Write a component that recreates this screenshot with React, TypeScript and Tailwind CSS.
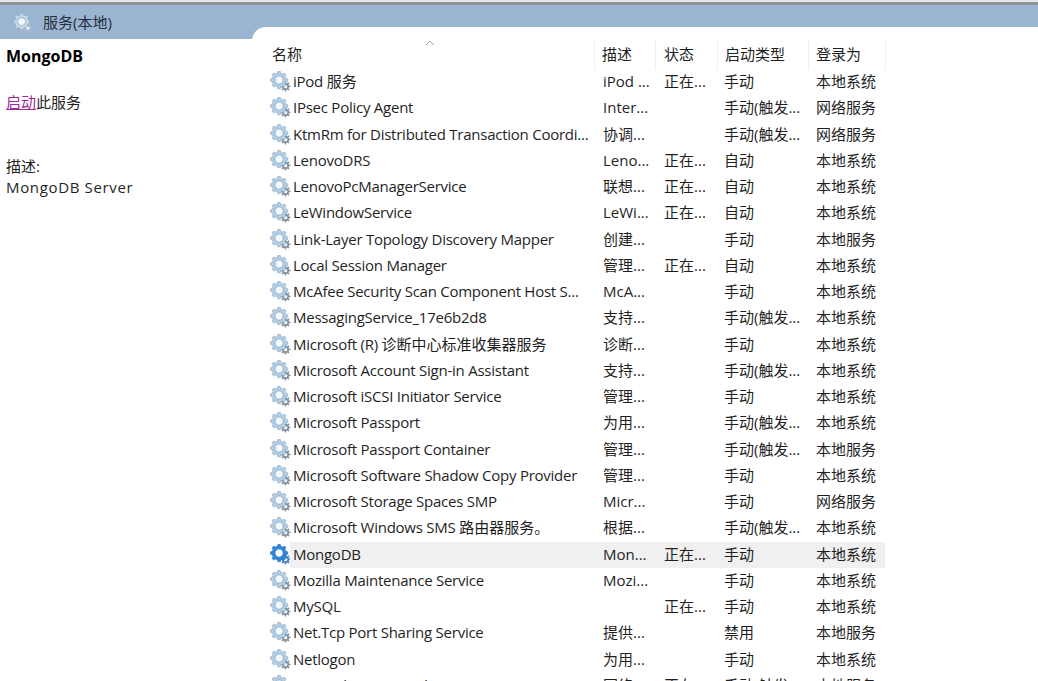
import React from "react";

function gearPath(cx: number, cy: number, ro: number, ri: number, teeth: number) {
  const pts: string[] = [];
  const step = (Math.PI * 2) / teeth;
  for (let i = 0; i < teeth; i++) {
    const a = i * step - Math.PI / 2;
    const list: [number, number][] = [
      [a - step * 0.3, ri],
      [a - step * 0.18, ro],
      [a + step * 0.18, ro],
      [a + step * 0.3, ri],
    ];
    for (const [t, r] of list) {
      pts.push(`${(cx + Math.cos(t) * r).toFixed(2)} ${(cy + Math.sin(t) * r).toFixed(2)}`);
    }
  }
  return "M" + pts.join("L") + "Z";
}

function Gear({ active = false, size = 21, faded = false }: { active?: boolean; size?: number; faded?: boolean }) {
  const main = active ? "#2f86d8" : faded ? "#c4d9e8" : "#b4cfe4";
  const edge = active ? "#2270bf" : faded ? "#8aa9c0" : "#86a6c2";
  const small = active ? "#4a86c2" : faded ? "#a9bccd" : "#8795a3";
  return (
    <svg width={size} height={size} viewBox="0 0 22 22" className="shrink-0">
      <path d={gearPath(16.2, 16.2, 5.4, 3.9, 8)} fill={small} />
      <circle cx="16.2" cy="16.2" r="1.9" fill="#ffffff" />
      <path d={gearPath(9.5, 9.5, 9.2, 7.4, 8)} fill={main} stroke={edge} strokeWidth="0.6" strokeLinejoin="round" />
      <circle cx="9.5" cy="9.5" r="4.4" fill={active ? "#f4f9fe" : "#f3f8fc"} stroke={edge} strokeWidth="0.9" />
    </svg>
  );
}

function Name({ text }: { text: string }) {
  const parts = text.split(/([\u4e00-\u9fff。]+)/);
  return (
    <>
      {parts.map((p, i) =>
        /[\u4e00-\u9fff]/.test(p) ? (
          <span key={i}>{p}</span>
        ) : (
          <span key={i} className="tracking-[-0.25px]">
            {p}
          </span>
        )
      )}
    </>
  );
}

type Row = [string, string, string, string, string];
const rows: Row[] = [
  ["iPod 服务", "iPod ...", "正在...", "手动", "本地系统"],
  ["IPsec Policy Agent", "Inter...", "", "手动(触发...", "网络服务"],
  ["KtmRm for Distributed Transaction Coordi...", "协调...", "", "手动(触发...", "网络服务"],
  ["LenovoDRS", "Leno...", "正在...", "自动", "本地系统"],
  ["LenovoPcManagerService", "联想...", "正在...", "自动", "本地系统"],
  ["LeWindowService", "LeWi...", "正在...", "自动", "本地系统"],
  ["Link-Layer Topology Discovery Mapper", "创建...", "", "手动", "本地服务"],
  ["Local Session Manager", "管理...", "正在...", "自动", "本地系统"],
  ["McAfee Security Scan Component Host S...", "McA...", "", "手动", "本地系统"],
  ["MessagingService_17e6b2d8", "支持...", "", "手动(触发...", "本地系统"],
  ["Microsoft (R) 诊断中心标准收集器服务", "诊断...", "", "手动", "本地系统"],
  ["Microsoft Account Sign-in Assistant", "支持...", "", "手动(触发...", "本地系统"],
  ["Microsoft iSCSI Initiator Service", "管理...", "", "手动", "本地系统"],
  ["Microsoft Passport", "为用...", "", "手动(触发...", "本地系统"],
  ["Microsoft Passport Container", "管理...", "", "手动(触发...", "本地服务"],
  ["Microsoft Software Shadow Copy Provider", "管理...", "", "手动", "本地系统"],
  ["Microsoft Storage Spaces SMP", "Micr...", "", "手动", "网络服务"],
  ["Microsoft Windows SMS 路由器服务。", "根据...", "", "手动(触发...", "本地系统"],
  ["MongoDB", "Mon...", "正在...", "手动", "本地系统"],
  ["Mozilla Maintenance Service", "Mozi...", "", "手动", "本地系统"],
  ["MySQL", "", "正在...", "手动", "本地系统"],
  ["Net.Tcp Port Sharing Service", "提供...", "", "禁用", "本地服务"],
  ["Netlogon", "为用...", "", "手动", "本地系统"],
  ["Network Connected Devices Auto-Setup", "网络...", "正在...", "手动(触发...", "本地服务"],
];

const font = { fontFamily: '"Open Sans", "Noto Sans CJK SC", sans-serif' };

export default function App() {
  return (
    <div className="h-[681px] w-[1038px] overflow-hidden bg-white text-[15px] text-[#1f1f1f] flex flex-col" style={font}>
      <div className="h-[2px] bg-[#e4e6ea]" />
      <div className="h-[3px] bg-[#8f949b]" />
      <div className="h-[34px] shrink-0 bg-[#9bb4d1] flex items-start pl-[13px] pt-[8px] gap-[10px]">
        <Gear size={20} faded />
        <span className="text-[15px] leading-[26px] text-[#26303c] -mt-[4px]">服务(本地)</span>
      </div>
      <div className="flex flex-1 min-h-0">
        <div className="w-[252px] shrink-0 bg-white pl-[6px] pt-[7px]">
          <div className="font-bold text-[16px] leading-[20px] text-black">MongoDB</div>
          <div className="mt-[26px] leading-[20px]">
            <span className="text-[#a0269a] underline">启动</span>此服务
          </div>
          <div className="mt-[44px] leading-[20px]">描述:</div>
          <div className="mt-[1px] leading-[20px] tracking-[0.65px]">MongoDB Server</div>
        </div>
        <div className="flex-1 -mt-[12px] bg-white rounded-tl-[14px] pt-[13px] overflow-hidden">
          <div className="w-[633px] flex h-[29.5px] ml-[10px] relative">
            <div className="w-[333px] pl-[10px] leading-[28px] border-r border-[#eceef0]">名称</div>
            <svg width="10" height="6" viewBox="0 0 10 6" className="absolute left-[163px] top-0">
              <path d="M1 5 L5 1 L9 5" fill="none" stroke="#a8a8a8" strokeWidth="1" />
            </svg>
            <div className="w-[61px] pl-[7px] leading-[28px] border-r border-[#eceef0]">描述</div>
            <div className="w-[62px] pl-[8px] leading-[28px] border-r border-[#eceef0]">状态</div>
            <div className="w-[91px] pl-[7px] leading-[28px] border-r border-[#eceef0]">启动类型</div>
            <div className="w-[77px] pl-[7px] leading-[28px] border-r border-[#eceef0]">登录为</div>
          </div>
          <div className="ml-[17px]">
            {rows.map((r, i) => {
              const sel = r[0] === "MongoDB";
              return (
                <div key={i} className="flex h-[26.25px] items-center w-[616px]">
                  <div className="w-[21px] shrink-0 flex items-center pb-[2px] pl-[1px]">
                    <Gear active={sel} />
                  </div>
                  <div className={`flex flex-1 h-full items-center whitespace-nowrap leading-[24px] ${sel ? "bg-[#f0f0f0]" : ""}`}>
                    <div className="w-[304px] pl-[3px] shrink-0 overflow-hidden pb-[3px]"><Name text={r[0]} /></div>
                    <div className="w-[61px] pl-[9px] shrink-0 pb-[3px]">{r[1]}</div>
                    <div className="w-[62px] pl-[9px] shrink-0 pb-[3px]">{r[2]}</div>
                    <div className="w-[91px] pl-[7px] shrink-0 pb-[3px]">{r[3]}</div>
                    <div className="w-[77px] pl-[8px] shrink-0 pb-[3px]">{r[4]}</div>
                  </div>
                </div>
              );
            })}
          </div>
        </div>
      </div>
    </div>
  );
}
